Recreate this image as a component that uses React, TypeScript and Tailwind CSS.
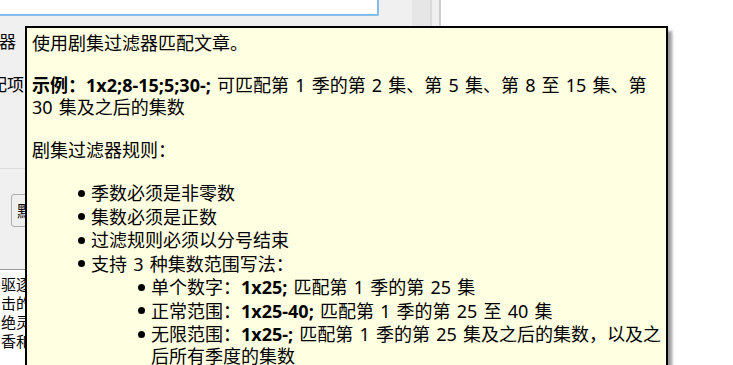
const font = { fontFamily: '"Noto Sans", "Noto Sans CJK SC", sans-serif' };

function Bullet() {
  return (
    <span className="flex h-[22px] w-[13px] shrink-0 items-center">
      <span className="block h-[7px] w-[7px] rounded-full bg-black" />
    </span>
  );
}

function Item({ children }: { children: React.ReactNode }) {
  return (
    <li className="mt-[1.5px] flex first:mt-0">
      <Bullet />
      <div className="whitespace-nowrap">{children}</div>
    </li>
  );
}

function Tooltip() {
  return (
    <div className="absolute left-[25px] top-[26px] h-[360px] w-[643px] border-2 border-black bg-[#ffffe1] pl-[5px] pt-[4px] text-[18px] leading-[22px] text-black shadow-[4px_5px_3px_rgba(0,0,0,0.4)] [word-spacing:1.5px]">
      <p>使用剧集过滤器匹配文章。</p>
      <p className="mt-[20px] whitespace-nowrap">
        <b>示例：1x2;8-15;5;30-;</b> 可匹配第 1 季的第 2 集、第 5 集、第 8 至 15 集、第
        <br />
        30 集及之后的集数
      </p>
      <p className="mt-[21px]">剧集过滤器规则：</p>
      <ul className="mt-[21px] pl-[46px]">
        <Item>季数必须是非零数</Item>
        <Item>集数必须是正数</Item>
        <Item>过滤规则必须以分号结束</Item>
        <Item>
          支持 3 种集数范围写法：
          <ul className="mt-[1.5px] pl-[47px]">
            <Item>
              单个数字：<b>1x25;</b> 匹配第 1 季的第 25 集
            </Item>
            <Item>
              正常范围：<b>1x25-40;</b> 匹配第 1 季的第 25 至 40 集
            </Item>
            <Item>
              无限范围：<b>1x25-;</b> 匹配第 1 季的第 25 集及之后的集数，以及之
              <br />
              后所有季度的集数
            </Item>
          </ul>
        </Item>
      </ul>
    </div>
  );
}

export default function App() {
  return (
    <div className="relative flex h-[365px] w-[733px] overflow-hidden bg-white" style={font}>
      <div className="flex w-[412px] flex-col bg-[#f0f0f0] text-[17px] leading-[22px] text-black">
        <div className="h-[16px] w-[379px] rounded-br-[2px] border-b-2 border-r-2 border-[#86bbee] bg-white" />
        <div className="mt-[15px] flex w-[16px] justify-end overflow-hidden whitespace-nowrap">剧集过滤器</div>
        <div className="mt-[21px] flex w-[24px] justify-end overflow-hidden whitespace-nowrap">忽略匹配项</div>
        <div className="mt-[72px] h-px bg-[#dcdcdc]" />
        <div className="ml-[11px] mt-[25px] flex h-[33px] w-[120px] items-center rounded-[3px] border border-[#adadad] bg-[#efefef] pl-[5px] text-[16px]">
          默认
        </div>
        <div className="mt-[42px] flex-1 border-t border-[#9a9a9a] bg-white pl-[1px] pt-[5px] text-[15px] leading-[19px]">
          <div className="whitespace-nowrap">驱逐舰</div>
          <div className="whitespace-nowrap">击的</div>
          <div className="whitespace-nowrap">绝灵</div>
          <div className="whitespace-nowrap">香和</div>
        </div>
      </div>
      <div className="flex">
        <div className="w-[18px] bg-[#e6e6e6]" />
        <div className="w-[2px] bg-[#dadada]" />
        <div className="w-[7px] bg-[#f0f0f0]" />
        <div className="w-[2px] bg-[#cccccc]" />
      </div>
      <div className="flex-1 bg-white" />
      <Tooltip />
    </div>
  );
}
